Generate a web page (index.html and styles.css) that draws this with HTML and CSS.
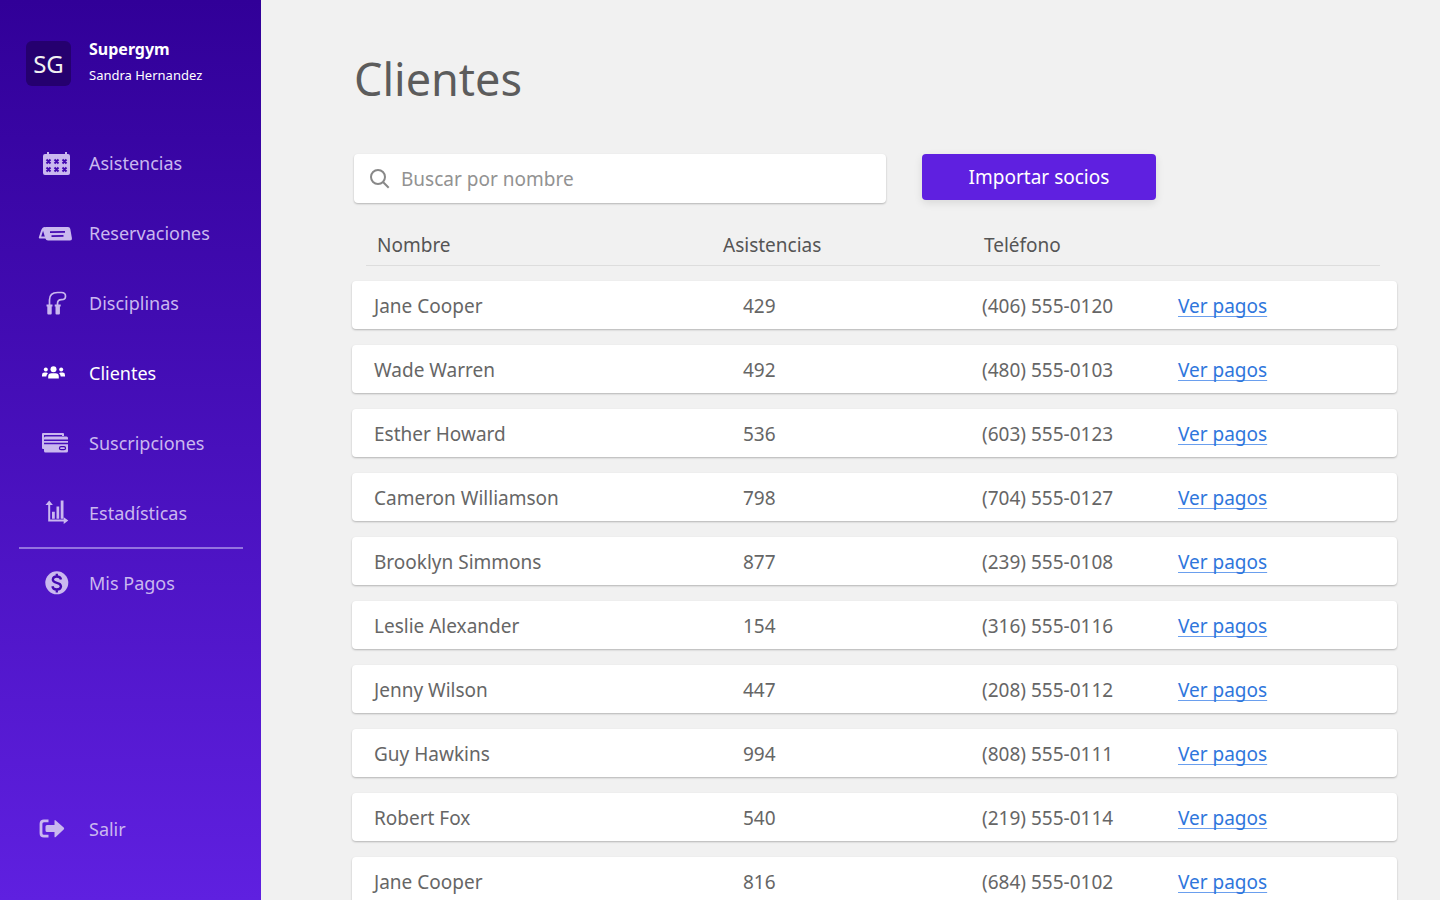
FILE: index.html
```html
<!DOCTYPE html>
<html lang="es">
<head>
<meta charset="utf-8">
<meta name="viewport" content="width=device-width, initial-scale=1">
<title>Clientes - Supergym</title>
<link rel="stylesheet" href="styles.css">
</head>
<body>
<div class="app">
  <aside class="sidebar">
    <div class="brand">
      <div class="brand-logo">SG</div>
      <div>
        <div class="brand-name">Supergym</div>
        <div class="brand-user">Sandra Hernandez</div>
      </div>
    </div>
    <nav class="nav">
      <a class="nav-link" href="#"><svg class="icon" viewBox="0 0 36 30" aria-hidden="true"><g transform="translate(1 1)"><path fill="currentColor" d="M6 5h2V3h2v2h16V3h2v2h1q2 0 2 2v17q0 2-2 2H6q-2 0-2-2V7q0-2 2-2z"/><path class="cut" stroke-width="2" d="M7.500 10.500l4 4m0-4l-4 4M15.500 10.500l4 4m0-4l-4 4M23.500 10.500l4 4m0-4l-4 4M7.500 18.500l4 4m0-4l-4 4M15.500 18.500l4 4m0-4l-4 4M23.500 18.500l4 4m0-4l-4 4"/></g></svg>Asistencias</a>
      <a class="nav-link" href="#"><svg class="icon" viewBox="0 0 36 30" aria-hidden="true"><g transform="translate(0 1)"><path fill="currentColor" d="M8 8h22q2 0 2.300 2l1.600 9q.3 2.500-2 2.500H10q-2 0-2.600-2L4.500 10Q5 8 8 8z"/><path fill="none" stroke="currentColor" stroke-width="2" stroke-linejoin="round" d="M7 9q-2 0-2.700 2L1.800 18.500h6"/><path class="cut" stroke-width="1.700" d="M12 13.200l15-.4M13.500 17.200l12-.4"/></g></svg>Reservaciones</a>
      <a class="nav-link" href="#"><svg class="icon" viewBox="0 0 36 30" aria-hidden="true"><path fill="none" stroke="currentColor" stroke-width="1.700" d="M11.500 17v-5q0-7.500 8-7.500h4q4 0 4 3.700 0 3.500-4 3.500-4 0-4 4v2"/><path fill="currentColor" d="M8.500 16.500h6v2h-.8v7q0 1-1 1h-2.400q-1 0-1-1v-7h-.8zM16.700 16.500h6v2h-.8v7q0 1-1 1h-2.400q-1 0-1-1v-7h-.8z"/></svg>Disciplinas</a>
      <a class="nav-link active" href="#" aria-current="page"><svg class="icon" viewBox="0 0 36 30" aria-hidden="true"><g fill="currentColor"><circle cx="15.500" cy="11.200" r="3"/><circle cx="7.800" cy="11.500" r="2"/><circle cx="23.200" cy="11.500" r="2"/><path d="M10.200 20.500v-2q0-3.300 3.300-3.300h4q3.300 0 3.300 3.300v2zM4 18.500v-1.500q0-2.400 2.400-2.400h1.800q1 0 1.700.7-1.400 1.200-1.600 3.200zM27 18.500v-1.500q0-2.400-2.400-2.400h-1.800q-1 0-1.700.7 1.400 1.200 1.600 3.200z"/></g></svg>Clientes</a>
      <a class="nav-link" href="#"><svg class="icon" viewBox="0 0 36 30" aria-hidden="true"><path fill="none" stroke="currentColor" stroke-width="2" stroke-linejoin="round" d="M6 20H5V6h20v2"/><path fill="currentColor" d="M7.500 8.500h21q1.500 0 1.500 1.500v1.500H6V10q0-1.500 1.500-1.500zM6 13h24v1.700H6zM6 16.200h24V23q0 1.500-1.500 1.500h-21Q6 24.500 6 23z"/><rect class="cut" x="21.500" y="18.700" width="6" height="3" rx="1.500" stroke-width="1.300"/></svg>Suscripciones</a>
      <a class="nav-link" href="#"><svg class="icon" viewBox="0 0 36 30" aria-hidden="true"><g fill="currentColor" transform="translate(1 0)"><path d="M9.200 7H6.500l3.700-4.500L13.900 7h-2.700v14.500h13.500v-2.300l4.600 3.400-4.600 3.500v-2.500H9.200z"/><path d="M13 13.800h2.800v7H13zM17.500 8.500h2.700v12.300h-2.700zM21.700 2.500h2.800v18.300h-2.800z"/></g></svg>Estadísticas</a>
      <hr class="nav-divider">
      <a class="nav-link" href="#"><svg class="icon" viewBox="0 0 36 30" aria-hidden="true"><circle cx="18.800" cy="14.800" r="11.500" fill="currentColor"/><path class="cut" stroke-width="2.300" d="M23 11.500q-.5-3-4.200-3t-4 3q0 2.500 4 3.300t4.200 3.500q-.3 3.200-4.200 3.200t-4.400-3.200M18.800 5.800V9M18.800 21v3.400"/></svg>Mis Pagos</a>
    </nav>
    <a class="nav-link logout" href="#"><svg class="icon" viewBox="0 0 36 30" aria-hidden="true"><path fill="none" stroke="currentColor" stroke-width="2.800" d="M10.500 6.800H6q-3 0-3 3v9.400q0 3 3 3h4.500"/><path fill="currentColor" d="M9 11h7.500V7q0-1.500 1.200-.6l8 7q1 1.100 0 2.200l-8 7.400q-1.200.9-1.200-.6V18H9q-1.500 0-1.500-1.500v-4Q7.500 11 9 11z"/></svg>Salir</a>
  </aside>
  <main class="main">
    <h1 class="title">Clientes</h1>
    <div class="toolbar">
      <label class="search">
        <svg class="search-icon" viewBox="0 0 20 20" aria-hidden="true"><circle cx="8" cy="8" r="7"/><path d="M13 13l5.700 5.700"/></svg>
        <input class="search-input" type="text" placeholder="Buscar por nombre" aria-label="Buscar por nombre">
      </label>
      <button class="import-button" type="button">Importar socios</button>
    </div>
    <table class="clients">
      <thead>
        <tr class="head-row"><th>Nombre</th><th>Asistencias</th><th>Teléfono</th></tr>
      </thead>
      <tbody class="client-list">
        <tr class="client"><td>Jane Cooper</td><td>429</td><td>(406) 555-0120</td><td><a class="pay-link" href="#">Ver pagos</a></td></tr>
        <tr class="client"><td>Wade Warren</td><td>492</td><td>(480) 555-0103</td><td><a class="pay-link" href="#">Ver pagos</a></td></tr>
        <tr class="client"><td>Esther Howard</td><td>536</td><td>(603) 555-0123</td><td><a class="pay-link" href="#">Ver pagos</a></td></tr>
        <tr class="client"><td>Cameron Williamson</td><td>798</td><td>(704) 555-0127</td><td><a class="pay-link" href="#">Ver pagos</a></td></tr>
        <tr class="client"><td>Brooklyn Simmons</td><td>877</td><td>(239) 555-0108</td><td><a class="pay-link" href="#">Ver pagos</a></td></tr>
        <tr class="client"><td>Leslie Alexander</td><td>154</td><td>(316) 555-0116</td><td><a class="pay-link" href="#">Ver pagos</a></td></tr>
        <tr class="client"><td>Jenny Wilson</td><td>447</td><td>(208) 555-0112</td><td><a class="pay-link" href="#">Ver pagos</a></td></tr>
        <tr class="client"><td>Guy Hawkins</td><td>994</td><td>(808) 555-0111</td><td><a class="pay-link" href="#">Ver pagos</a></td></tr>
        <tr class="client"><td>Robert Fox</td><td>540</td><td>(219) 555-0114</td><td><a class="pay-link" href="#">Ver pagos</a></td></tr>
        <tr class="client"><td>Jane Cooper</td><td>816</td><td>(684) 555-0102</td><td><a class="pay-link" href="#">Ver pagos</a></td></tr>
      </tbody>
    </table>
  </main>
</div>
</body>
</html>
```

FILE: styles.css
```css
* { box-sizing: border-box; }

body {
  margin: 0;
  background: #f1f1f1;
  color: #666;
  font-family: "Noto Sans", "Liberation Sans", sans-serif;
  font-size: 19px;
  line-height: 26px;
}

.app {
  display: flex;
  height: 100vh;
  overflow: hidden;
}

/* Sidebar */
.sidebar {
  --cut: #4309b0;
  display: flex;
  flex-direction: column;
  flex: 0 0 261px;
  padding: 36px 18px 36px 19px;
  background: linear-gradient(#310098, #5f20e0);
}

.brand {
  display: flex;
  align-items: flex-end;
  gap: 18px;
  padding-left: 7px;
  color: #fff;
}

.brand-logo {
  display: grid;
  place-items: center;
  width: 45px;
  height: 45px;
  margin-bottom: 2px;
  border-radius: 6px;
  background: #25006f;
  color: #f1f1f1;
  font-size: 24px;
}

.brand-name { font-size: 16px; font-weight: 700; }
.brand-user { font-size: 13px; }

.nav {
  display: flex;
  flex-direction: column;
  margin-top: 40px;
}

.nav-link {
  display: flex;
  align-items: center;
  gap: 15px;
  height: 70px;
  padding-left: 19px;
  color: #cab8ef;
  font-size: 18px;
  text-decoration: none;
}

.nav-link.active { color: #fff; }
.icon { width: 36px; height: 30px; }
.cut { fill: none; stroke: var(--cut); }

.nav-divider {
  width: 100%;
  height: 2px;
  margin: -1px 0;
  border: 0;
  background: #9373df;
}

.logout { margin-top: auto; }

/* Content */
.main {
  flex: 1;
  min-width: 0;
  padding: 47px 43px 0 91px;
}

.title {
  margin: 0 2px;
  color: #5c5c5c;
  font-size: 45px;
  font-weight: 400;
  line-height: 64px;
}

.toolbar {
  display: flex;
  align-items: flex-start;
  gap: 36px;
  margin: 43px 2px 0;
}

.search {
  display: flex;
  align-items: center;
  gap: 11px;
  flex: 0 1 532px;
  height: 49px;
  padding: 0 16px;
  border-radius: 4px;
  background: #fff;
  box-shadow: 0 1px 2px rgba(0, 0, 0, 0.25);
}

.search-icon {
  flex: none;
  width: 20px;
  height: 20px;
  fill: none;
  stroke: #888;
  stroke-width: 2;
}

.search-input {
  flex: 1;
  min-width: 0;
  padding: 0;
  border: 0;
  outline: 0;
  background: none;
  color: #555;
  font: inherit;
}

.search-input::placeholder { color: #929292; opacity: 1; }

.import-button {
  flex: 0 0 234px;
  height: 46px;
  padding: 0;
  border: 0;
  border-radius: 4px;
  background: #5f20e0;
  box-shadow: 0 3px 8px rgba(0, 0, 0, 0.1);
  color: #fff;
  font: inherit;
}

/* Client list */
.clients { display: block; margin-top: 29px; }
.clients thead { display: block; }
.clients th, .clients td { padding: 0; font-weight: 400; text-align: left; }

.head-row {
  display: grid;
  grid-template-columns: 346fr 261fr 396fr;
  margin: 0 17px 0 14px;
  padding: 0 0 7px 11px;
  border-bottom: 1px solid #ddd;
  color: #555;
}

.client-list {
  display: flex;
  flex-direction: column;
  gap: 16px;
  margin-top: 15px;
}

.client {
  display: grid;
  grid-template-columns: 369fr 239fr 196fr 219fr;
  padding: 12px 0 10px 22px;
  border-radius: 4px;
  background: #fff;
  box-shadow: 0 1px 2px rgba(0, 0, 0, 0.25);
}

.pay-link {
  color: #2f76dc;
  text-decoration-color: #6a9fee;
  text-decoration-thickness: 1px;
  text-underline-offset: 3px;
  text-decoration-skip-ink: none;
}
```
